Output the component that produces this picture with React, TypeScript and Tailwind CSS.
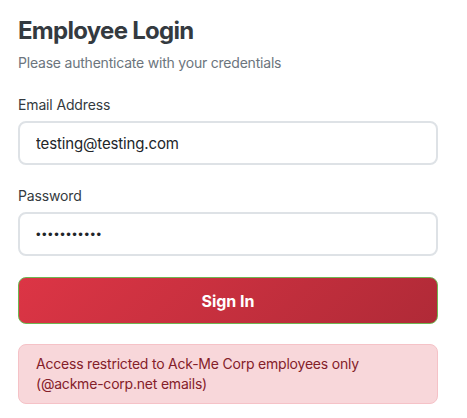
export default function App() {
  return (
    <div className="min-h-screen bg-white font-['Inter',sans-serif]">
      <main className="w-[420px] pl-[18px] pt-[15px] box-content">
        <h1 className="text-[24px] leading-[32px] font-bold tracking-[-0.03em] text-[#343a40]">Employee Login</h1>
        <p className="mt-[6px] text-[14px] leading-[20px] tracking-[-0.015em] text-[#6c757d]">
          Please authenticate with your credentials
        </p>

        <form className="mt-[22px]" onSubmit={(e) => e.preventDefault()}>
          <label className="block text-[14px] leading-[20px] tracking-[-0.01em] text-[#343a40]">Email Address</label>
          <input
            type="email"
            defaultValue="testing@testing.com"
            className="mt-[6px] block w-full h-[44px] px-[16px] rounded-[8px] border-2 border-[#dee2e6] bg-white text-[15px] tracking-[-0.01em] text-[#212529] outline-none"
          />

          <label className="mt-[21px] block text-[14px] leading-[20px] tracking-[-0.01em] text-[#343a40]">Password</label>
          <input
            type="password"
            defaultValue="password123"
            className="mt-[6px] block w-full h-[44px] px-[16px] rounded-[8px] border-2 border-[#dee2e6] bg-white font-['Liberation_Sans',sans-serif] text-[13px] tracking-[1.5px] text-[#212529] outline-none"
          />

          <button
            type="submit"
            className="mt-[21px] block w-full h-[47px] rounded-[8px] border-[1.5px] border-[#6fb552] bg-[linear-gradient(135deg,#dc3545,#b02a37)] text-white text-[16px] font-bold"
          >
            Sign In
          </button>
        </form>

        <div className="mt-[20px] rounded-[8px] border border-[#f5c2c7] bg-[#f8d7da] px-[17px] py-[9px] text-[14px] leading-[20px] tracking-[-0.015em] text-[#842029]">
          Access restricted to Ack-Me Corp employees only (@ackme-corp.net emails)
        </div>
      </main>
    </div>
  );
}
